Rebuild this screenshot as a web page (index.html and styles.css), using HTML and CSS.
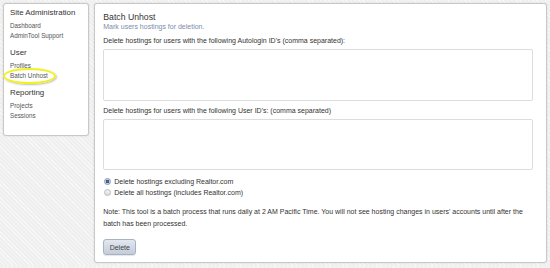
FILE: index.html
```html
<!DOCTYPE html>
<html lang="en">
<head>
    <meta charset="UTF-8">
    <meta name="viewport" content="width=device-width, initial-scale=1.0">
    <title>Batch Unhost</title>
    <link rel="stylesheet" href="styles.css">
</head>
<body>
    <div class="layout">
        <!-- Side Navigation -->
        <div class="sidebar">
            <h3>Site Administration</h3>
            <a href="#">Dashboard</a>
            <a href="#">AdminTool Support</a>

            <h3 class="group">User</h3>
            <a href="#">Profiles</a>
            <a href="#" class="current">Batch Unhost</a>

            <h3 class="group">Reporting</h3>
            <a href="#">Projects</a>
            <a href="#">Sessions</a>
        </div>

        <!-- Main Panel -->
        <div class="panel">
            <h2>Batch Unhost</h2>
            <p class="subtitle">Mark users hostings for deletion.</p>

            <label class="field-label" for="autologin-ids">Delete hostings for users with the following Autologin ID's (comma separated):</label>
            <textarea id="autologin-ids" class="ids ids-first"></textarea>

            <label class="field-label" for="user-ids">Delete hostings for users with the following User ID's: (comma separated)</label>
            <textarea id="user-ids" class="ids ids-second"></textarea>

            <div class="options">
                <label class="option"><input type="radio" name="mode" checked> Delete hostings excluding Realtor.com</label>
                <label class="option"><input type="radio" name="mode"> Delete all hostings (includes Realtor.com)</label>
            </div>

            <p class="note">Note: This tool is a batch process that runs daily at 2 AM Pacific Time. You will not see hosting changes in users' accounts until after the batch has been processed.</p>

            <button class="button">Delete</button>
        </div>
    </div>
</body>
</html>
```

FILE: styles.css
```css
/* Body Styling */
body {
    margin: 0;
    padding: 3px;
    font-family: 'Liberation Sans', Arial, sans-serif;
    color: #333;
    background-color: #efefef;
    background-image: repeating-linear-gradient(45deg, rgba(255, 255, 255, 0.5) 0 1px, transparent 1px 3px);
}

.layout {
    display: flex;
    align-items: flex-start;
    gap: 5px;
}

/* Sidebar */
.sidebar {
    position: relative;
    width: 73px;
    padding: 4px 6px 14px 6px;
    background: #fff;
    border: 1px solid #c8c8c8;
    border-radius: 3px;
    box-shadow: 0 0 2px rgba(0, 0, 0, 0.12);
}

.sidebar h3 {
    margin: 0 0 3px 0;
    font-size: 7.9px;
    line-height: 10px;
    font-weight: normal;
    color: #333;
    white-space: nowrap;
}

.sidebar h3.group {
    margin-top: 7px;
}

.sidebar a {
    display: block;
    font-size: 6.3px;
    line-height: 10px;
    color: #555;
    text-decoration: none;
    white-space: nowrap;
}

/* Yellow highlight ring around the current page */
.sidebar a.current {
    position: relative;
}

.sidebar a.current::after {
    content: "";
    position: absolute;
    left: -7px;
    top: -3px;
    width: 49px;
    height: 12px;
    border: 2px solid #f2f01e;
    border-radius: 50%;
    box-shadow: 1px 1px 2px rgba(0, 0, 0, 0.25);
}

/* Main Panel */
.panel {
    width: 434px;
    padding: 8px 13px 7px 8px;
    background: #fff;
    border: 1px solid #c8c8c8;
    border-radius: 3px;
    box-shadow: 0 0 2px rgba(0, 0, 0, 0.12);
}

h2 {
    margin: 0;
    font-size: 8.7px;
    line-height: 10px;
    font-weight: normal;
    color: #333;
}

.subtitle {
    margin: 0;
    font-size: 7px;
    line-height: 10px;
    color: #7a8ea8;
}

.field-label {
    display: block;
    margin-top: 4px;
    font-size: 7px;
    line-height: 10px;
    color: #333;
}

.ids {
    display: block;
    box-sizing: border-box;
    width: 100%;
    margin-top: 3px;
    padding: 2px;
    border: 1px solid #dcdcdc;
    border-radius: 2px;
    resize: none;
    font-family: inherit;
}

.ids-first {
    height: 52px;
}

.ids-second {
    height: 51px;
}

.field-label + .ids + .field-label {
    margin-top: 5px;
}

/* Radio Options */
.options {
    margin-top: 6px;
}

.option {
    display: flex;
    align-items: center;
    gap: 3px;
    height: 11px;
    font-size: 7px;
    color: #333;
}

.option input {
    appearance: none;
    -webkit-appearance: none;
    box-sizing: border-box;
    width: 7px;
    height: 7px;
    margin: 0 0 0 1px;
    border: 1px solid #b9b9b9;
    border-radius: 50%;
    background: linear-gradient(#f4f4f4, #dcdcdc);
}

.option input:checked {
    border-color: #8a96a8;
    background: radial-gradient(circle, #3c5f9a 0 1.5px, #c9d2e0 2px);
}

.note {
    margin: 8px 0 0 0;
    font-size: 7px;
    line-height: 12px;
    color: #333;
}

/* Button Styling */
.button {
    display: block;
    margin-top: 9px;
    width: 33px;
    height: 16px;
    padding: 0;
    font-family: inherit;
    font-size: 7px;
    color: #444;
    background: linear-gradient(#e3e8f0, #c3ccda);
    border: 1px solid #a8b2c2;
    border-radius: 3px;
    box-shadow: 0 1px 1px rgba(0, 0, 0, 0.1);
    cursor: pointer;
}
```
